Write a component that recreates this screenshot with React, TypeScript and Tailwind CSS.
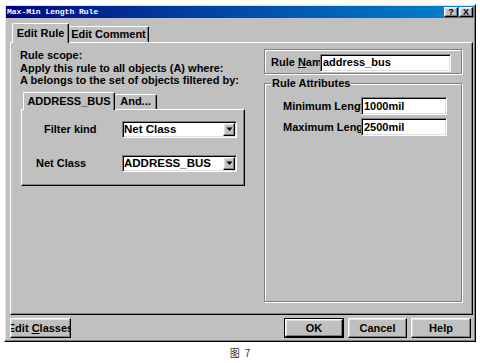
const raised =
  'border border-t-white border-l-white border-r-black border-b-black shadow-[inset_-1px_-1px_#808080,inset_1px_1px_#dfdfdf] bg-[#c0c0c0]';
const sunken =
  'border border-t-[#808080] border-l-[#808080] border-r-white border-b-white shadow-[inset_1px_1px_#000,inset_-1px_-1px_#dfdfdf] bg-white';
const etched = 'border border-[#808080] shadow-[inset_1px_1px_#fff,1px_1px_#fff]';
const label = 'text-[11px] font-bold text-black leading-[13px] whitespace-nowrap';

const Select = ({ value }: { value: string }) => (
  <div className={`${sunken} flex h-[17px] w-[115px] items-center`}>
    <div className="flex-1 overflow-hidden whitespace-nowrap pl-[1px] text-[11.5px] font-bold leading-[13px] text-black">
      {value}
    </div>
    <div className={`${raised} mr-[1px] flex h-[13px] w-[12px] items-center justify-center`}>
      <svg width="7" height="5" viewBox="0 0 7 5">
        <path d="M0.5 0.5h6L3.5 4z" fill="#000" />
      </svg>
    </div>
  </div>
);

const Field = ({ value, width }: { value: string; width: string }) => (
  <div className={`${sunken} flex h-[18px] ${width} items-center`}>
    <div className={`${label} pl-[2px]`}>{value}</div>
  </div>
);

const Button = ({ children, width, isDefault }: { children: React.ReactNode; width: string; isDefault?: boolean }) => (
  <div className={isDefault ? `border border-black ${width}` : width}>
    <div
      className={`${raised} ${label} flex ${isDefault ? 'h-[18px]' : 'h-[20px]'} items-center justify-center overflow-hidden`}
    >
      <span>{children}</span>
    </div>
  </div>
);

export default function App() {
  return (
    <div className="h-[363px] w-[480px] overflow-hidden bg-white font-['Liberation_Sans',Arial,sans-serif]">
      <div className="pl-[4px] pt-[4px]">
        <div className={`${raised} flex h-[338px] w-[472px] flex-col p-[1px]`}>
          {/* title bar */}
          <div className="flex h-[12px] items-center bg-gradient-to-r from-[#000080] to-[#1084d0] pl-[1px] pr-[1px]">
            <div className="flex-1 font-['Liberation_Mono',monospace] text-[8px] font-bold leading-[12px] text-white">
              Max-Min Length Rule
            </div>
            <div className="flex gap-[1px]">
              <div className={`${raised} flex h-[10px] w-[14px] items-center justify-center text-[9px] font-bold leading-[9px] text-black`}>
                ?
              </div>
              <div className={`${raised} flex h-[10px] w-[14px] items-center justify-center text-[9px] font-bold leading-[9px] text-black`}>
                X
              </div>
            </div>
          </div>

          {/* body */}
          <div className="flex flex-1 flex-col pl-[4px] pr-[1px] pt-[5px]">
            <div className="flex h-[19px] items-end pl-[2px]">
              <div className={`${label} relative z-10 -mb-[1px] flex h-[20px] w-[57px] items-center justify-center rounded-t-[2px] border border-b-0 border-t-white border-l-white border-r-black bg-[#c0c0c0] shadow-[inset_-1px_0_#808080]`}>
                Edit Rule
              </div>
              <div className={`${label} flex h-[16px] w-[80px] items-center justify-center rounded-t-[2px] border border-b-0 border-l-0 border-t-white border-r-black bg-[#c0c0c0] shadow-[inset_-1px_0_#808080]`}>
                Edit Comment
              </div>
            </div>

            <div className="flex h-[273px] border border-t-white border-l-white border-r-black border-b-black pl-[9px] pt-[6px] shadow-[inset_-1px_-1px_#808080]">
              {/* left column */}
              <div className="flex w-[225px] flex-col">
                <div className="text-[11px] font-bold leading-[12.5px] text-black">
                  <div>Rule scope:</div>
                  <div className="whitespace-nowrap">Apply this rule to all objects (A) where:</div>
                  <div className="whitespace-nowrap">A belongs to the set of objects filtered by:</div>
                </div>
                <div className="ml-[1px] mt-[5px] w-[224px]">
                  <div className="flex h-[17px] items-end pl-[2px]">
                    <div className={`${label} relative z-10 -mb-[1px] flex h-[18px] w-[92px] items-center justify-center rounded-t-[2px] border border-b-0 border-t-white border-l-white border-r-black bg-[#c0c0c0] shadow-[inset_-1px_0_#808080]`}>
                      ADDRESS_BUS
                    </div>
                    <div className={`${label} flex h-[15px] w-[42px] items-center justify-center rounded-t-[2px] border border-b-0 border-l-0 border-t-white border-r-black bg-[#c0c0c0] shadow-[inset_-1px_0_#808080]`}>
                      And...
                    </div>
                  </div>
                  <div className="flex h-[77px] flex-col gap-[17px] border border-t-white border-l-white border-r-black border-b-black pt-[11px] shadow-[inset_-1px_-1px_#808080]">
                    <div className="flex items-center">
                      <div className={`${label} w-[100px] pl-[22px]`}>Filter kind</div>
                      <Select value="Net Class" />
                    </div>
                    <div className="flex items-center">
                      <div className={`${label} w-[100px] pl-[14px]`}>Net Class</div>
                      <Select value="ADDRESS_BUS" />
                    </div>
                  </div>
                </div>
              </div>

              {/* right column */}
              <div className="ml-[19px] flex w-[198px] flex-col">
                <div className={`${etched} flex h-[25px] items-center pl-[6px] pt-[2px]`}>
                  <div className={`${label} w-[49px] overflow-hidden`}>
                    Rule <span className="underline">N</span>ame
                  </div>
                  <Field value="address_bus" width="w-[131px]" />
                </div>
                <div className={`${etched} relative mt-[9px] flex h-[219px] flex-col gap-[3px] pl-[18px] pt-[13px]`}>
                  <div className={`${label} absolute -top-[7px] left-[6px] bg-[#c0c0c0] px-[1px]`}>Rule Attributes</div>
                  <div className="flex items-center">
                    <div className={`${label} w-[78px] overflow-hidden`}>Minimum Length</div>
                    <Field value="1000mil" width="w-[86px]" />
                  </div>
                  <div className="flex items-center">
                    <div className={`${label} w-[78px] overflow-hidden`}>Maximum Length</div>
                    <Field value="2500mil" width="w-[86px]" />
                  </div>
                </div>
              </div>
            </div>

            {/* bottom buttons */}
            <div className="mt-[3px] flex items-start justify-between pr-[2px]">
              <Button width="w-[61px]">
                Edit <span className="underline">C</span>lasses
              </Button>
              <div className="flex gap-[4px]">
                <Button width="w-[60px]" isDefault>
                  OK
                </Button>
                <Button width="w-[59px]">Cancel</Button>
                <Button width="w-[60px]">Help</Button>
              </div>
            </div>
          </div>
        </div>
      </div>
      <div className="mt-[5px] flex justify-center gap-[5px] font-['Noto_Sans_CJK_SC','Noto_Sans',sans-serif] text-[10px] leading-[12px] text-[#333]">
        <span>图</span>
        <span>7</span>
      </div>
    </div>
  );
}
